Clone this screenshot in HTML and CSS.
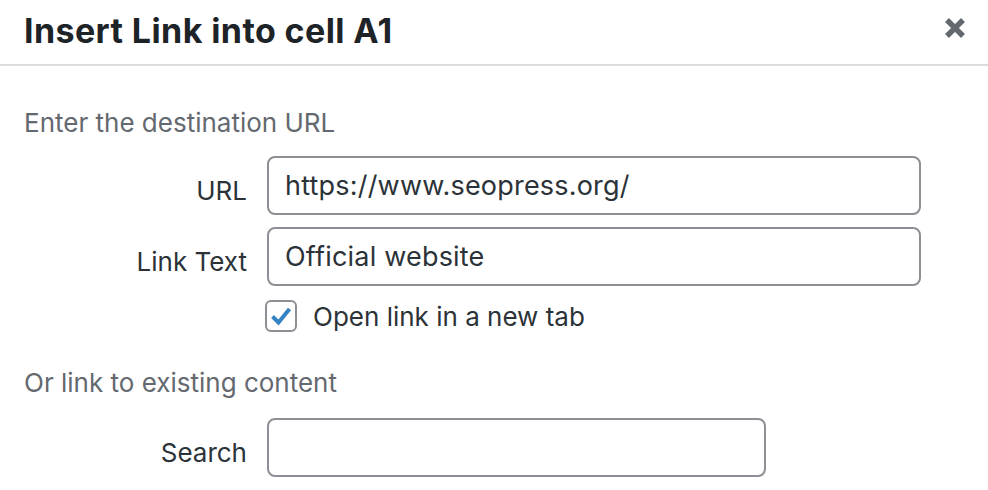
FILE: index.html
```html
<!DOCTYPE html>
<html lang="en">
<head>
    <meta charset="UTF-8">
    <meta name="viewport" content="width=device-width, initial-scale=1.0">
    <title>Insert Link</title>
    <link rel="stylesheet" href="styles.css">
</head>
<body>
    <div class="modal">
        <div class="modal-header">
            <h1>Insert Link into cell A1</h1>
            <button class="btn-close" aria-label="Close">
                <svg width="22" height="22" viewBox="0 0 22 22">
                    <path d="M3 3 L19 19 M19 3 L3 19" stroke="#646970" stroke-width="5.5" stroke-linecap="butt"/>
                </svg>
            </button>
        </div>

        <div class="modal-body">
            <p class="section-title">Enter the destination URL</p>

            <div class="row">
                <label for="url">URL</label>
                <input type="text" id="url" class="field" value="https://www.seopress.org/">
            </div>
            <div class="row">
                <label for="linkText">Link Text</label>
                <input type="text" id="linkText" class="field" value="Official website">
            </div>
            <div class="row row-check">
                <span class="spacer"></span>
                <label class="check">
                    <span class="checkbox">
                        <svg width="24" height="24" viewBox="0 0 24 24">
                            <path d="M3.5 12.5 L9.5 18.5 L20.5 5" fill="none" stroke="#3582c4" stroke-width="4"/>
                        </svg>
                    </span>
                    Open link in a new tab
                </label>
            </div>

            <p class="section-title section-second">Or link to existing content</p>

            <div class="row">
                <label for="search">Search</label>
                <input type="text" id="search" class="field field-short">
            </div>
        </div>
    </div>
</body>
</html>
```

FILE: styles.css
```css
* {
    margin: 0;
    padding: 0;
    box-sizing: border-box;
}

body {
    font-family: Inter, "Noto Sans", sans-serif;
    background-color: #fff;
    color: #2c3338;
}

.modal-header {
    height: 66px;
    padding: 0 22px 0 24px;
    display: flex;
    align-items: center;
    justify-content: space-between;
    border-bottom: 2px solid #dcdcde;
}

.modal-header h1 {
    font-size: 34px;
    font-weight: 700;
    color: #1d2327;
    margin-top: -4px;
    letter-spacing: 0.4px;
}

.btn-close {
    background: none;
    border: none;
    width: 22px;
    height: 22px;
    margin-top: -9px;
    cursor: pointer;
}

.modal-body {
    padding: 41px 24px 0;
}

.section-title {
    font-size: 26px;
    color: #646970;
    margin-bottom: 18px;
}

.section-second {
    margin-top: 35px;
    margin-bottom: 20px;
}

.row {
    display: flex;
    align-items: center;
    gap: 20px;
    margin-bottom: 12px;
}

.row label,
.spacer {
    width: 223px;
    flex-shrink: 0;
    text-align: right;
    font-size: 26px;
    color: #2c3338;
    padding-top: 10px;
}

.field {
    width: 654px;
    height: 59px;
    padding: 0 16px;
    border: 2px solid #8c8f94;
    border-radius: 8px;
    font-family: inherit;
    font-size: 27px;
    letter-spacing: 0.2px;
    color: #2c3338;
    outline: none;
}

.field-short {
    width: 499px;
}

.row-check {
    margin-top: 14px;
    margin-bottom: 0;
}

.row .check {
    width: auto;
    display: flex;
    align-items: center;
    gap: 16px;
    text-align: left;
    padding-top: 0;
    margin-left: -2px;
}

.checkbox {
    width: 32px;
    height: 32px;
    border: 2px solid #8c8f94;
    border-radius: 6px;
    display: flex;
    align-items: center;
    justify-content: center;
}
```
